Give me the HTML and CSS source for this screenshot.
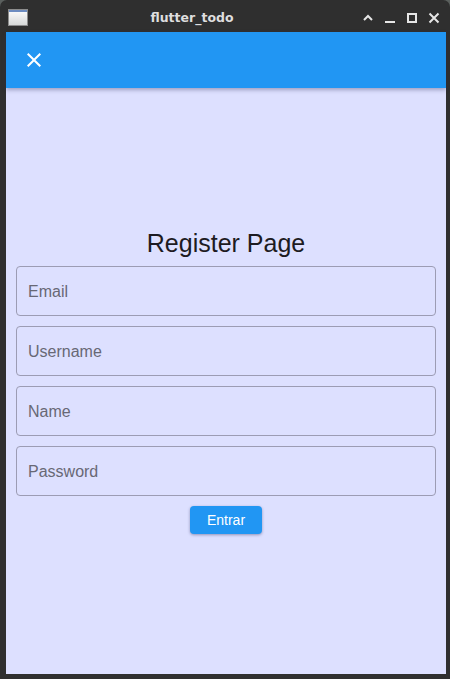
FILE: index.html
```html
<!DOCTYPE html>
<html>
<head>
<meta charset="utf-8">
<link rel="stylesheet" href="styles.css">
</head>
<body>
<div class="window">
  <div class="titlebar">
    <div class="appicon"><div class="appicon-stripe"></div></div>
    <div class="title">flutter_todo</div>
    <div class="controls">
      <svg class="ctl" width="12" height="12" viewBox="0 0 12 12"><path d="M2 8 L6 4 L10 8" fill="none" stroke="#e6e6e6" stroke-width="2"/></svg>
      <svg class="ctl" width="12" height="12" viewBox="0 0 12 12"><path d="M1 10 H11" fill="none" stroke="#e6e6e6" stroke-width="2"/></svg>
      <svg class="ctl" width="12" height="12" viewBox="0 0 12 12"><rect x="2" y="2" width="8" height="8" fill="none" stroke="#e6e6e6" stroke-width="2"/></svg>
      <svg class="ctl" width="12" height="12" viewBox="0 0 12 12"><path d="M1.5 1.5 L10.5 10.5 M10.5 1.5 L1.5 10.5" fill="none" stroke="#e6e6e6" stroke-width="2"/></svg>
    </div>
  </div>
  <div class="content">
    <div class="appbar">
      <svg class="close" width="24" height="24" viewBox="0 0 24 24"><path d="M19 6.41 17.59 5 12 10.59 6.41 5 5 6.41 10.59 12 5 17.59 6.41 19 12 13.41 17.59 19 19 17.59 13.41 12z" fill="#ffffff"/></svg>
    </div>
    <div class="page">
      <div class="form">
        <h1 class="heading">Register Page</h1>
        <div class="field"><span class="placeholder">Email</span></div>
        <div class="field"><span class="placeholder">Username</span></div>
        <div class="field"><span class="placeholder">Name</span></div>
        <div class="field"><span class="placeholder">Password</span></div>
        <button class="submit">Entrar</button>
      </div>
    </div>
  </div>
</div>
</body>
</html>
```
FILE: styles.css
```css
html, body {
  margin: 0;
  padding: 0;
  background: #5a5f5d;
  width: 450px;
  height: 679px;
  overflow: hidden;
}
.window {
  width: 450px;
  height: 679px;
  background: #2f2f2f;
  border-radius: 7px 7px 0 0;
  display: flex;
  flex-direction: column;
  box-sizing: border-box;
  padding: 0 4px 5px 6px;
}
.titlebar {
  height: 32px;
  flex: none;
  display: flex;
  align-items: center;
  position: relative;
}
.appicon {
  width: 18px;
  height: 15px;
  margin-left: 2px;
  margin-top: 3px;
  border: 1px solid #8c8c8c;
  background: linear-gradient(#fdfdfd, #d6d8d8);
  box-sizing: content-box;
}
.appicon-stripe {
  height: 2px;
  background: #6d8cc0;
}
.title {
  position: absolute;
  left: 136px;
  top: 0;
  width: 100px;
  line-height: 35px;
  text-align: center;
  font-family: "DejaVu Sans", sans-serif;
  font-weight: bold;
  font-size: 12.5px;
  color: #dedede;
}
.controls {
  margin-left: auto;
  display: flex;
  gap: 10px;
  margin-right: 6px;
  margin-top: 4px;
}
.content {
  flex: 1;
  display: flex;
  flex-direction: column;
  background: #dde0ff;
  min-height: 0;
}
.appbar {
  height: 56px;
  flex: none;
  background: #2196f3;
  display: flex;
  align-items: center;
  padding-left: 16px;
  box-shadow: 0 2px 4px rgba(40, 40, 80, 0.35);
  position: relative;
  z-index: 1;
}
.close {
  display: block;
}
.page {
  flex: 1;
  display: flex;
  flex-direction: column;
  justify-content: center;
  padding: 0 10px;
}
.form {
  display: flex;
  flex-direction: column;
  align-items: stretch;
  gap: 10px;
  margin-top: -1px;
}
.heading {
  margin: 0 0 -2px;
  font-family: "Liberation Sans", Arial, sans-serif;
  font-weight: 400;
  font-size: 25px;
  line-height: 30px;
  text-align: center;
  color: #1d1b22;
}
.field {
  height: 50px;
  box-sizing: border-box;
  border: 1px solid #9c9cb4;
  border-radius: 4px;
  display: flex;
  align-items: center;
  padding-left: 11px;
  padding-top: 2px;
}
.placeholder {
  font-family: "Liberation Sans", Arial, sans-serif;
  font-size: 16px;
  color: #686875;
}
.submit {
  align-self: center;
  width: 72px;
  height: 28px;
  border: none;
  border-radius: 4px;
  background: #2196f3;
  color: #ffffff;
  font-family: "Liberation Sans", Arial, sans-serif;
  font-size: 14px;
  padding: 0;
  box-shadow: 0 1px 3px rgba(30, 30, 80, 0.4);
}
```
